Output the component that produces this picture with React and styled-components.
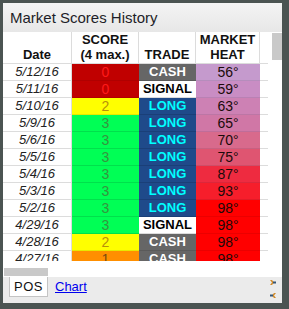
import React from 'react';
import styled, { createGlobalStyle } from 'styled-components';

const GlobalStyle = createGlobalStyle`
  html, body {
    margin: 0;
    padding: 0;
    background: #4b5452;
  }
  body {
    font-family: Arial, "Liberation Sans", sans-serif;
  }
`;

const Page = styled.div`
  padding: 3px;
  width: 289px;
  height: 309px;
  box-sizing: border-box;
`;

const Card = styled.div`
  width: 279px;
  height: 300px;
  background: #fff;
  display: flex;
  flex-direction: column;
  overflow: hidden;
`;

const TitleBar = styled.div`
  height: 29px;
  flex: none;
  display: flex;
  align-items: center;
  padding-left: 7px;
  background: linear-gradient(#f4f4f4, #e7e7e7);
  font-size: 15px;
  color: #1e1e28;
`;

const Body = styled.div`
  height: 229px;
  flex: none;
  display: flex;
  gap: 4px;
  overflow: hidden;
`;

const Viewport = styled.div`
  width: 265px;
  overflow: hidden;
`;

const Table = styled.table`
  border-collapse: separate;
  border-spacing: 0;
  table-layout: fixed;
  width: 265px;
`;

const HeadCell = styled.th`
  width: ${p => p.$w}px;
  height: 30px;
  padding: 0 0 1px;
  box-sizing: border-box;
  vertical-align: bottom;
  font-size: 13px;
  line-height: 15px;
  font-weight: bold;
  color: #111;
  border-bottom: 1px solid #dcdcdc;
  border-right: ${p => (p.$last ? 'none' : '1px solid #dcdcdc')};
`;

const Cell = styled.td`
  height: 16px;
  padding: 0;
  text-align: center;
  font-size: 14px;
  line-height: 16px;
  white-space: nowrap;
  overflow: hidden;
  background: ${p => p.$bg || '#fff'};
  color: ${p => p.$fg || '#222'};
  border-bottom: 1px solid ${p => p.$line || '#dcdcdc'};
`;

const DateCell = styled(Cell)`
  font-size: 13px;
  font-style: italic;
  color: #222;
  border-right: 1px solid #dcdcdc;
`;

const TradeCell = styled(Cell)`
  font-size: 13px;
  font-weight: bold;
`;

const VScroll = styled.div`
  width: 10px;
  padding-top: 1px;
`;

const Thumb = styled.div`
  background: #c9c9c9;
  width: ${p => p.$w}px;
  height: ${p => p.$h}px;
`;

const HScroll = styled.div`
  height: 16px;
  flex: none;
  padding: 7px 0 0 1px;
  box-sizing: border-box;
`;

const TabBar = styled.div`
  flex: 1;
  background: #ebebeb;
  display: flex;
  align-items: flex-start;
  padding-left: 6px;
  position: relative;
`;

const Tab = styled.div`
  width: 39px;
  height: 20px;
  box-sizing: border-box;
  background: #fff;
  border: 1px solid #c4c4c4;
  border-top: none;
  font-size: 13px;
  line-height: 19px;
  text-align: center;
  color: #111;
  letter-spacing: 0.5px;
`;

const TabLink = styled.a`
  margin-left: 7px;
  font-size: 13px;
  line-height: 20px;
  color: #0000ee;
  text-decoration: underline;
`;

const Arrows = styled.div`
  position: absolute;
  right: 6px;
  top: 3px;
  display: flex;
  flex-direction: column;
  gap: 8px;
`;

const scoreStyle = {
  0: { bg: '#c00000', fg: '#ff1a1a', line: '#b00000' },
  1: { bg: '#ff8f00', fg: '#7a4a10', line: '#e88200' },
  2: { bg: '#ffff00', fg: '#b8900a', line: '#e8e800' },
  3: { bg: '#00ff55', fg: '#36943f', line: '#00e04c' },
};

const tradeStyle = {
  CASH: { bg: '#666666', fg: '#ffffff', line: '#5a5a5a' },
  LONG: { bg: '#1f4a8a', fg: '#00ffff', line: '#1a3f78' },
  SIGNAL: { bg: '#ffffff', fg: '#000000', line: '#dcdcdc' },
};

const heatColor = {
  56: '#c59acd',
  59: '#c98dc4',
  63: '#cd81b4',
  65: '#d077a6',
  70: '#d86a8c',
  75: '#df5571',
  87: '#ee2b40',
  93: '#f61e2b',
  98: '#ff0000',
};

const rows = [
  ['5/12/16', 0, 'CASH', 56],
  ['5/11/16', 0, 'SIGNAL', 59],
  ['5/10/16', 2, 'LONG', 63],
  ['5/9/16', 3, 'LONG', 65],
  ['5/6/16', 3, 'LONG', 70],
  ['5/5/16', 3, 'LONG', 75],
  ['5/4/16', 3, 'LONG', 87],
  ['5/3/16', 3, 'LONG', 93],
  ['5/2/16', 3, 'LONG', 98],
  ['4/29/16', 3, 'SIGNAL', 98],
  ['4/28/16', 2, 'CASH', 98],
  ['4/27/16', 1, 'CASH', 98],
];

const App = () => (
  <Page>
    <GlobalStyle />
    <Card>
      <TitleBar>Market Scores History</TitleBar>
      <Body>
        <Viewport>
          <Table>
            <thead>
              <tr>
                <HeadCell $w={69}>Date</HeadCell>
                <HeadCell $w={67}>SCORE<br />(4 max.)</HeadCell>
                <HeadCell $w={57}>TRADE</HeadCell>
                <HeadCell $w={64}>MARKET<br />HEAT</HeadCell>
                <HeadCell $w={8} $last />
              </tr>
            </thead>
            <tbody>
              {rows.map(([date, score, trade, heat]) => {
                const s = scoreStyle[score];
                const t = tradeStyle[trade];
                return (
                  <tr key={date}>
                    <DateCell>{date}</DateCell>
                    <Cell $bg={s.bg} $fg={s.fg} $line={s.line}>{score}</Cell>
                    <TradeCell $bg={t.bg} $fg={t.fg} $line={t.line}>{trade}</TradeCell>
                    <Cell $bg={heatColor[heat]} $fg="#1a0a0a" $line="rgba(0,0,0,0.08)">{heat}°</Cell>
                    <Cell />
                  </tr>
                );
              })}
            </tbody>
          </Table>
        </Viewport>
        <VScroll>
          <Thumb $w={10} $h={27} />
        </VScroll>
      </Body>
      <HScroll>
        <Thumb $w={44} $h={8} />
      </HScroll>
      <TabBar>
        <Tab>POS</Tab>
        <TabLink href="#">Chart</TabLink>
        <Arrows>
          <svg width="6" height="5" viewBox="0 0 6 5">
            <path d="M0 0h2l2 2.5L2 5H0l2-2.5z" fill="#d08a2a" />
            <path d="M3 1.5h3v2H3z" fill="#335577" />
          </svg>
          <svg width="6" height="5" viewBox="0 0 6 5">
            <path d="M6 0H4L2 2.5 4 5h2L4 2.5z" fill="#d08a2a" />
            <path d="M0 1.5h3v2H0z" fill="#335577" />
          </svg>
        </Arrows>
      </TabBar>
    </Card>
  </Page>
);

export default App;
